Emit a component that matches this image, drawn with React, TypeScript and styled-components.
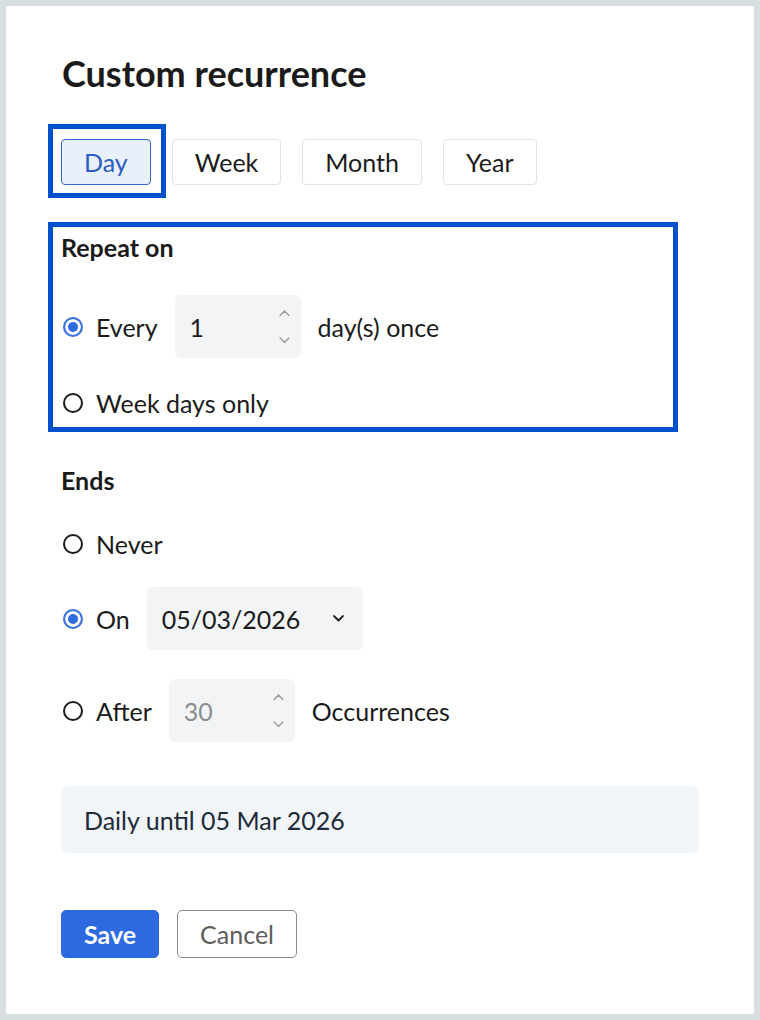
import React from 'react'
import styled, { createGlobalStyle, css } from 'styled-components'

const GlobalStyle = createGlobalStyle`
  html, body {
    margin: 0;
    padding: 0;
    background: #d8dfe3;
  }
  body {
    font-family: 'Lato', 'Noto Sans', sans-serif;
    color: #1b1b1b;
  }
`

const Page = styled.div`
  padding: 6px;
  width: 760px;
  height: 1020px;
  box-sizing: border-box;
`

const Card = styled.div`
  background: #fff;
  width: 748px;
  height: 1008px;
  box-sizing: border-box;
  padding: 45px 55px 0 55px;
  border-radius: 2px;
`

const Title = styled.h1`
  margin: 0 0 0 1px;
  font-size: 36px;
  line-height: 44px;
  font-weight: 700;
  color: #1a1a1a;
`

const Tabs = styled.div`
  display: flex;
  gap: 21px;
  margin-top: 44px;
`

const focusRing = css`
  &::after {
    content: '';
    position: absolute;
    border: 5px solid #0052cc;
    pointer-events: none;
  }
`

const Tab = styled.button<{ $active?: boolean }>`
  position: relative;
  height: 46px;
  padding: 0 22px;
  font-family: inherit;
  font-size: 25px;
  border-radius: 4px;
  border: 1px solid #e3e3e3;
  background: #fff;
  color: #1b1b1b;
  ${(p) =>
    p.$active &&
    css`
      background: #e8f0fc;
      border-color: #3a68c8;
      color: #2d5cc0;
      ${focusRing}
      &::after {
        top: -16px;
        bottom: -14px;
        left: -14px;
        right: -16px;
      }
    `}
`

const Section = styled.div<{ $top: number; $focused?: boolean }>`
  position: relative;
  margin-top: ${(p) => p.$top}px;
  ${(p) =>
    p.$focused &&
    css`
      ${focusRing}
      &::after {
        top: -10px;
        bottom: -9px;
        left: -13px;
        right: 21px;
      }
    `}
`

const Heading = styled.div`
  font-size: 25px;
  font-weight: 700;
  line-height: 30px;
  color: #1a1a1a;
`

const Row = styled.div<{ $top: number; $tall?: boolean }>`
  display: flex;
  align-items: center;
  gap: 17px;
  margin-top: ${(p) => p.$top}px;
  height: ${(p) => (p.$tall ? 63 : 40)}px;
  font-size: 25px;
`

const RadioLabel = styled.label`
  display: flex;
  align-items: center;
  gap: 13px;
  padding-left: 2px;
`

const Radio = styled.span<{ $checked?: boolean }>`
  width: 20px;
  height: 20px;
  border-radius: 50%;
  box-sizing: border-box;
  border: 2px solid #1b1b1b;
  background: #fff;
  ${(p) =>
    p.$checked &&
    css`
      border-color: #3a72e0;
      box-shadow: inset 0 0 0 3px #fff;
      background: #2f6be0;
    `}
`

const Field = styled.div<{ $width: number; $muted?: boolean; $padRight?: number }>`
  display: flex;
  align-items: center;
  justify-content: space-between;
  width: ${(p) => p.$width}px;
  height: 63px;
  box-sizing: border-box;
  padding: 0 ${(p) => p.$padRight ?? 11}px 0 15px;
  background: #f3f4f5;
  border-radius: 6px;
  color: ${(p) => (p.$muted ? '#8a8d91' : '#1b1b1b')};
  font-size: 25px;
`

const Spinner = styled.div`
  display: flex;
  flex-direction: column;
  gap: 20px;
`

const Summary = styled.div`
  margin-top: 44px;
  height: 67px;
  box-sizing: border-box;
  padding: 0 23px;
  display: flex;
  align-items: center;
  background: #f2f5f8;
  border-radius: 6px;
  font-size: 25px;
  color: #1d2b3b;
`

const Actions = styled.div`
  display: flex;
  gap: 18px;
  margin-top: 57px;
`

const Button = styled.button<{ $primary?: boolean }>`
  height: 48px;
  padding: 0 22px;
  border-radius: 5px;
  font-family: inherit;
  font-size: 25px;
  border: 1px solid #8c8c8c;
  background: #fff;
  color: #5d5d5d;
  ${(p) =>
    p.$primary &&
    css`
      border-color: #2d69df;
      background: #2d69df;
      color: #fff;
      font-weight: 700;
    `}
`

const Chevron = ({
  up,
  size = 11,
  color = '#9a9a9a',
  stroke = 1.3,
}: {
  up?: boolean
  size?: number
  color?: string
  stroke?: number
}) => (
  <svg width={size} height={size * 0.6} viewBox="0 0 10 6" fill="none">
    <path
      d={up ? 'M1 5l4-4 4 4' : 'M1 1l4 4 4-4'}
      stroke={color}
      strokeWidth={stroke}
      strokeLinecap="round"
      strokeLinejoin="round"
    />
  </svg>
)

const Stepper = () => (
  <Spinner>
    <Chevron up />
    <Chevron />
  </Spinner>
)

export default function App() {
  return (
    <Page>
      <GlobalStyle />
      <Card>
        <Title>Custom recurrence</Title>
        <Tabs>
          <Tab $active>Day</Tab>
          <Tab>Week</Tab>
          <Tab>Month</Tab>
          <Tab>Year</Tab>
        </Tabs>

        <Section $top={47} $focused>
          <Heading>Repeat on</Heading>
          <Row $top={33} $tall>
            <RadioLabel>
              <Radio $checked />
              Every
            </RadioLabel>
            <Field $width={126}>
              1
              <Stepper />
            </Field>
            <span>day(s) once</span>
          </Row>
          <Row $top={25}>
            <RadioLabel>
              <Radio />
              Week days only
            </RadioLabel>
          </Row>
        </Section>

        <Section $top={42}>
          <Heading>Ends</Heading>
          <Row $top={29}>
            <RadioLabel>
              <Radio />
              Never
            </RadioLabel>
          </Row>
          <Row $top={23} $tall>
            <RadioLabel>
              <Radio $checked />
              On
            </RadioLabel>
            <Field $width={216} $padRight={19}>
              05/03/2026
              <Chevron size={11} color="#1b1b1b" stroke={1.8} />
            </Field>
          </Row>
          <Row $top={29} $tall>
            <RadioLabel>
              <Radio />
              After
            </RadioLabel>
            <Field $width={126} $muted>
              30
              <Stepper />
            </Field>
            <span>Occurrences</span>
          </Row>
        </Section>

        <Summary>Daily until 05 Mar 2026</Summary>

        <Actions>
          <Button $primary>Save</Button>
          <Button>Cancel</Button>
        </Actions>
      </Card>
    </Page>
  )
}
